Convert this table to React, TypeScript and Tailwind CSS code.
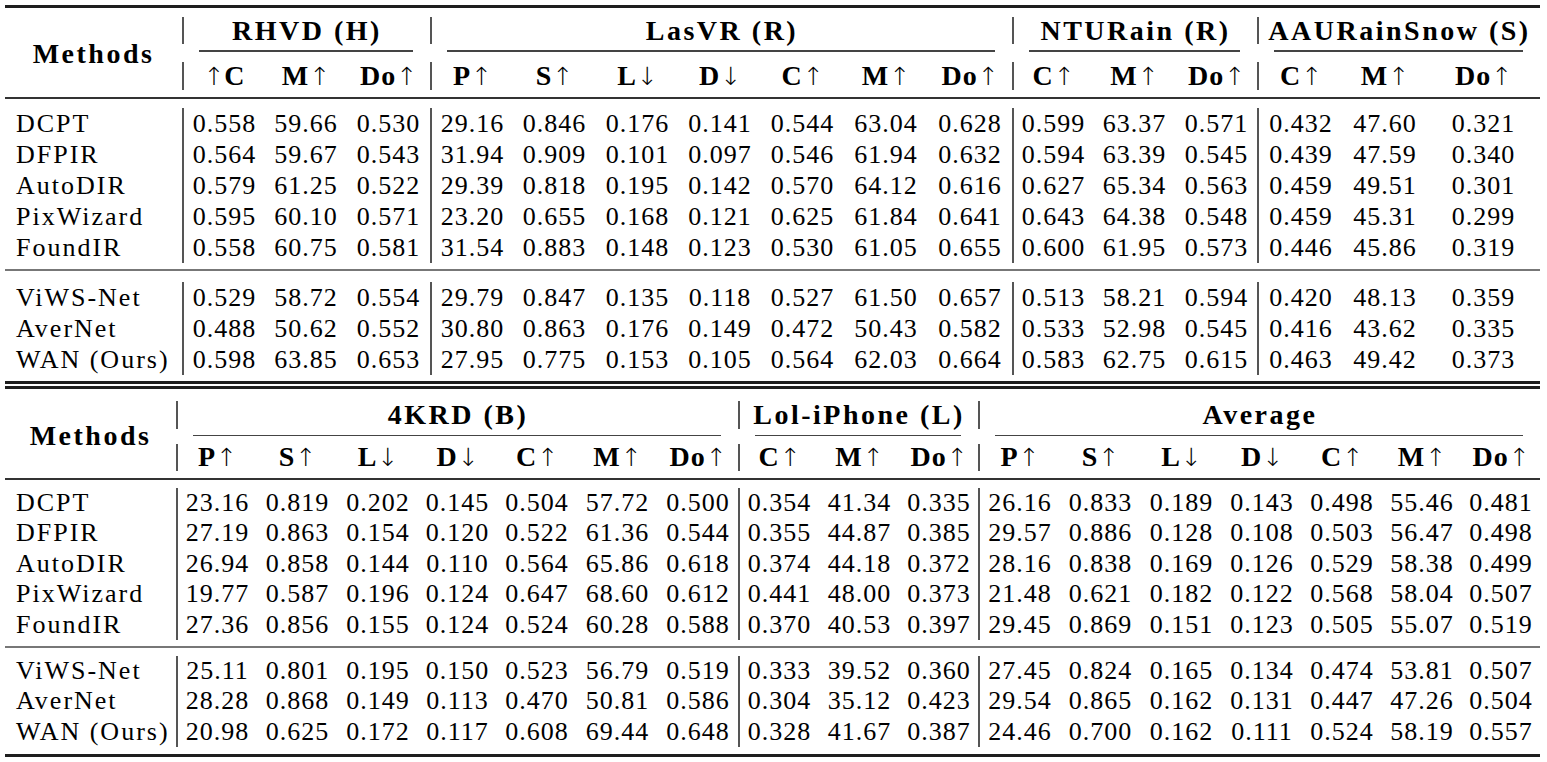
import React from 'react';

type Group = { title: string; pos: string; labels: string[] };

const serif = "font-['Liberation_Serif',serif]";

const topCols =
  'grid-cols-[177px_83px_82px_83px_83px_83px_83px_82px_83px_84px_84px_81px_83px_81px_86px_84px_113px]';
const bottomCols =
  'grid-cols-[171px_81px_81px_80px_79px_80px_81px_80px_81px_81px_78px_82px_81px_81px_80px_80px_80px_78px]';

const topGroups: Group[] = [
  { title: 'RHVD (H)', pos: 'col-start-2 col-span-3', labels: ['↑C', 'M↑', 'Do↑'] },
  { title: 'LasVR (R)', pos: 'col-start-5 col-span-7', labels: ['P↑', 'S↑', 'L↓', 'D↓', 'C↑', 'M↑', 'Do↑'] },
  { title: 'NTURain (R)', pos: 'col-start-12 col-span-3', labels: ['C↑', 'M↑', 'Do↑'] },
  { title: 'AAURainSnow (S)', pos: 'col-start-15 col-span-3', labels: ['C↑', 'M↑', 'Do↑'] },
];

const bottomGroups: Group[] = [
  { title: '4KRD (B)', pos: 'col-start-2 col-span-7', labels: ['P↑', 'S↑', 'L↓', 'D↓', 'C↑', 'M↑', 'Do↑'] },
  { title: 'Lol-iPhone (L)', pos: 'col-start-9 col-span-3', labels: ['C↑', 'M↑', 'Do↑'] },
  { title: 'Average', pos: 'col-start-12 col-span-7', labels: ['P↑', 'S↑', 'L↓', 'D↓', 'C↑', 'M↑', 'Do↑'] },
];

const topRows: [string, string][] = [
  ['DCPT', '0.558 59.66 0.530 29.16 0.846 0.176 0.141 0.544 63.04 0.628 0.599 63.37 0.571 0.432 47.60 0.321'],
  ['DFPIR', '0.564 59.67 0.543 31.94 0.909 0.101 0.097 0.546 61.94 0.632 0.594 63.39 0.545 0.439 47.59 0.340'],
  ['AutoDIR', '0.579 61.25 0.522 29.39 0.818 0.195 0.142 0.570 64.12 0.616 0.627 65.34 0.563 0.459 49.51 0.301'],
  ['PixWizard', '0.595 60.10 0.571 23.20 0.655 0.168 0.121 0.625 61.84 0.641 0.643 64.38 0.548 0.459 45.31 0.299'],
  ['FoundIR', '0.558 60.75 0.581 31.54 0.883 0.148 0.123 0.530 61.05 0.655 0.600 61.95 0.573 0.446 45.86 0.319'],
  ['ViWS-Net', '0.529 58.72 0.554 29.79 0.847 0.135 0.118 0.527 61.50 0.657 0.513 58.21 0.594 0.420 48.13 0.359'],
  ['AverNet', '0.488 50.62 0.552 30.80 0.863 0.176 0.149 0.472 50.43 0.582 0.533 52.98 0.545 0.416 43.62 0.335'],
  ['WAN (Ours)', '0.598 63.85 0.653 27.95 0.775 0.153 0.105 0.564 62.03 0.664 0.583 62.75 0.615 0.463 49.42 0.373'],
];

const bottomRows: [string, string][] = [
  ['DCPT', '23.16 0.819 0.202 0.145 0.504 57.72 0.500 0.354 41.34 0.335 26.16 0.833 0.189 0.143 0.498 55.46 0.481'],
  ['DFPIR', '27.19 0.863 0.154 0.120 0.522 61.36 0.544 0.355 44.87 0.385 29.57 0.886 0.128 0.108 0.503 56.47 0.498'],
  ['AutoDIR', '26.94 0.858 0.144 0.110 0.564 65.86 0.618 0.374 44.18 0.372 28.16 0.838 0.169 0.126 0.529 58.38 0.499'],
  ['PixWizard', '19.77 0.587 0.196 0.124 0.647 68.60 0.612 0.441 48.00 0.373 21.48 0.621 0.182 0.122 0.568 58.04 0.507'],
  ['FoundIR', '27.36 0.856 0.155 0.124 0.524 60.28 0.588 0.370 40.53 0.397 29.45 0.869 0.151 0.123 0.505 55.07 0.519'],
  ['ViWS-Net', '25.11 0.801 0.195 0.150 0.523 56.79 0.519 0.333 39.52 0.360 27.45 0.824 0.165 0.134 0.474 53.81 0.507'],
  ['AverNet', '28.28 0.868 0.149 0.113 0.470 50.81 0.586 0.304 35.12 0.423 29.54 0.865 0.162 0.131 0.447 47.26 0.504'],
  ['WAN (Ours)', '20.98 0.625 0.172 0.117 0.608 69.44 0.648 0.328 41.67 0.387 24.46 0.700 0.162 0.111 0.524 58.19 0.557'],
];

// bold letters, thin math arrows
const Label = ({ t }: { t: string }) => (
  <>
    {t.split(/([↑↓])/).map((p, i) =>
      p === '↑' || p === '↓' ? (
        <span key={i} className="font-['DejaVu_Sans',sans-serif] font-extralight text-[25px] tracking-normal">
          {p}
        </span>
      ) : (
        <span key={i} className="tracking-[1px]">{p}</span>
      )
    )}
  </>
);

const Header = ({ cols, groups, rows }: { cols: string; groups: Group[]; rows: string }) => (
  <div className={`grid ${cols} ${rows} text-[28px] font-bold text-black leading-none`}>
    <div className="col-start-1 row-start-1 row-span-3 flex items-center justify-center tracking-[2.5px]">
      Methods
    </div>
    {groups.map((g) => (
      <React.Fragment key={g.title}>
        <div className={`${g.pos} row-start-1 flex items-center justify-center border-l-2 border-[#555] tracking-[2.5px]`}>
          {g.title}
        </div>
        <div className={`${g.pos} row-start-2 px-[17px] pt-[6px]`}>
          <div className="h-[1.5px] bg-[#444]" />
        </div>
      </React.Fragment>
    ))}
    {groups.map((g) =>
      g.labels.map((l, i) => (
        <div
          key={g.title + i}
          className={`row-start-3 flex items-center justify-center ${i === 0 ? 'border-l-2 border-[#555]' : ''}`}
        >
          <Label t={l} />
        </div>
      ))
    )}
  </div>
);

const Body = ({
  cols,
  rows,
  bars,
  h,
}: {
  cols: string;
  rows: [string, string][];
  bars: number[];
  h: string;
}) => (
  <div className="flex flex-col text-[26px] text-black leading-none">
    {rows.map(([name, vals]) => (
      <div key={name} className={`grid ${cols} ${h}`}>
        <div className="flex items-center pl-[11px] tracking-[2px] whitespace-nowrap">{name}</div>
        {vals.split(' ').map((v, i) => (
          <div
            key={i}
            className={`flex items-center justify-center tracking-[1px] ${bars.includes(i + 1) ? 'border-l-2 border-[#555]' : ''}`}
          >
            {v}
          </div>
        ))}
      </div>
    ))}
  </div>
);

export default function App() {
  return (
    <div className={`w-[1547px] h-[762px] bg-white overflow-hidden px-[5px] pt-[5px] ${serif}`}>
      <div className="w-[1535px] flex flex-col">
        {/* upper table */}
        <div className="h-[3px] bg-[#1e1e1e]" />
        <div className="mt-[9px]">
          <Header cols={topCols} groups={topGroups} rows="grid-rows-[27px_18px_28px]" />
        </div>
        <div className="mt-[7px] mb-[9px] h-[2px] bg-[#333]" />
        <Body cols={topCols} rows={topRows.slice(0, 5)} bars={[1, 4, 11, 14]} h="h-[31px]" />
        <div className="mt-[6px] mb-[11px] h-[2px] bg-[#777]" />
        <Body cols={topCols} rows={topRows.slice(5)} bars={[1, 4, 11, 14]} h="h-[31px]" />
        <div className="mt-[6px] h-[2.5px] bg-[#1e1e1e]" />

        {/* lower table */}
        <div className="mt-[2.5px] h-[2.5px] bg-[#1e1e1e]" />
        <div className="mt-[12px]">
          <Header cols={bottomCols} groups={bottomGroups} rows="grid-rows-[28px_15px_27px]" />
        </div>
        <div className="mt-[7px] mb-[8px] h-[2px] bg-[#333]" />
        <Body cols={bottomCols} rows={bottomRows.slice(0, 5)} bars={[1, 8, 11]} h="h-[30.5px]" />
        <div className="mt-[5.5px] mb-[8px] h-[2px] bg-[#777]" />
        <Body cols={bottomCols} rows={bottomRows.slice(5)} bars={[1, 8, 11]} h="h-[30.5px]" />
        <div className="mt-[6.5px] h-[3px] bg-[#1e1e1e]" />
      </div>
    </div>
  );
}
